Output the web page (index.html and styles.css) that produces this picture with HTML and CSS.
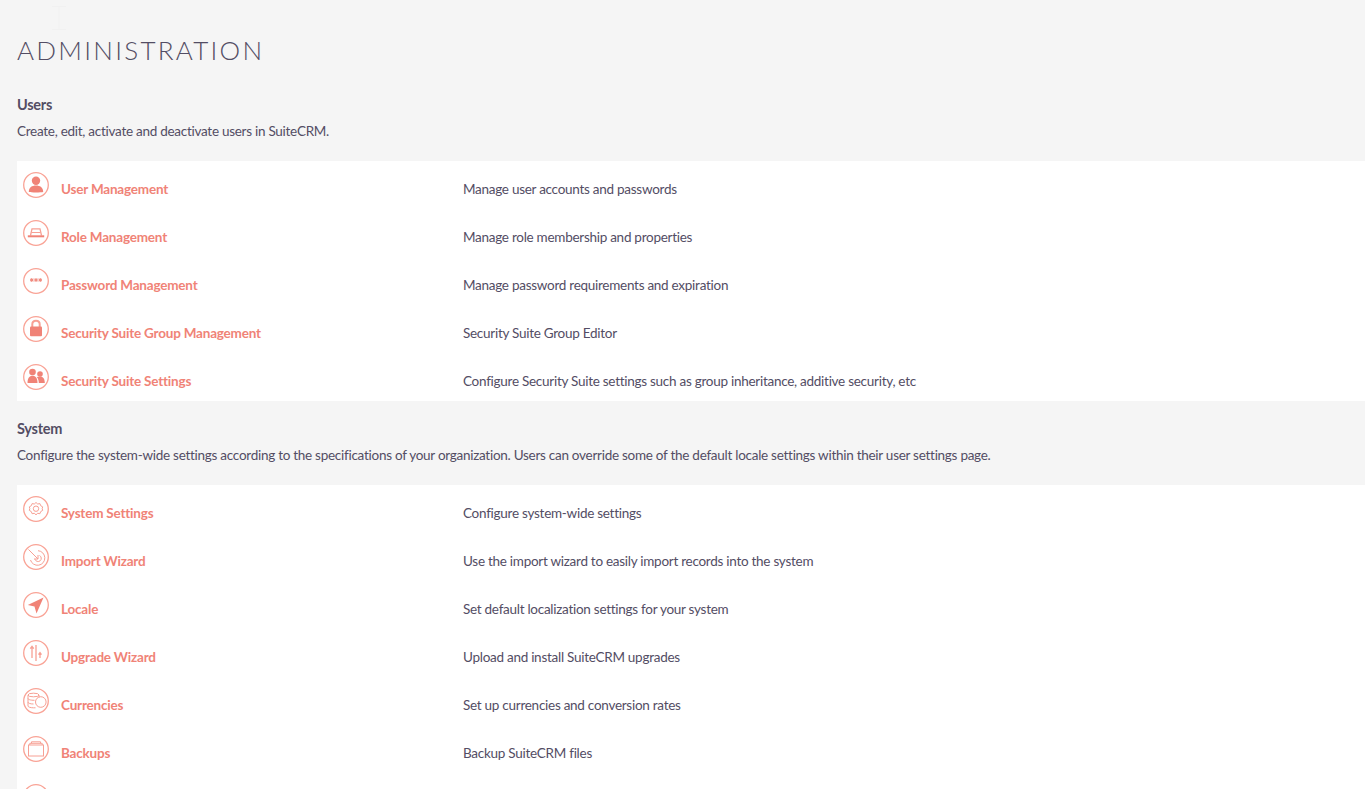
FILE: index.html
```html
<!DOCTYPE html>
<html lang="en">
<head>
<meta charset="utf-8">
<title>Administration</title>
<link rel="stylesheet" href="styles.css">
</head>
<body>
<svg class="ghost-cursor" viewBox="0 0 14 24" aria-hidden="true"><path d="M0 .5h14M0 23.500h14M7 .5v23"/></svg>
<main class="page">
  <h1 class="title">ADMINISTRATION</h1>

  <section class="first">
    <header class="sec-head">
      <h2>Users</h2>
      <p>Create, edit, activate and deactivate users in SuiteCRM.</p>
    </header>
    <div class="rows">
      <div class="row">
        <svg class="ico" viewBox="0 0 26 26"><circle class="ring" cx="13" cy="13" r="12.3"/><circle class="fill" cx="13" cy="8.800" r="4.200"/><path class="fill" d="M5.800 20c0-4.500 3.200-6.500 7.200-6.500s7.200 2 7.200 6.500c-2 .6-12.400.6-14.400 0z"/></svg>
        <a href="#">User Management</a><span>Manage user accounts and passwords</span>
      </div>
      <div class="row">
        <svg class="ico" viewBox="0 0 26 26"><circle class="ring" cx="13" cy="13" r="12.3"/><path class="line thick" d="M7.500 15.500 9 8.800h8l1.500 6.700"/><path class="fill" d="M4.800 15.300h16.400v2H4.800z"/><path class="line" d="M8.500 12.500h9"/></svg>
        <a href="#">Role Management</a><span>Manage role membership and properties</span>
      </div>
      <div class="row">
        <svg class="ico" viewBox="0 0 26 26"><circle class="ring" cx="13" cy="13" r="12.3"/><path class="star" d="M8.800 10v4M7 11l3.600 2M10.600 11 7 13M13 10v4M11.200 11l3.600 2M14.800 11l-3.600 2M17.200 10v4M15.400 11l3.600 2M19 11l-3.600 2"/></svg>
        <a href="#">Password Management</a><span>Manage password requirements and expiration</span>
      </div>
      <div class="row">
        <svg class="ico" viewBox="0 0 26 26"><circle class="ring" cx="13" cy="13" r="12.3"/><path class="line thicker" d="M9.300 11.500V8.300c0-2.200 1.500-3.500 3.700-3.500s3.700 1.300 3.700 3.500v3.200"/><rect class="fill" x="7" y="10.500" width="12" height="9.800" rx="1"/></svg>
        <a href="#">Security Suite Group Management</a><span>Security Suite Group Editor</span>
      </div>
      <div class="row">
        <svg class="ico" viewBox="0 0 26 26"><circle class="ring" cx="13" cy="13" r="12.3"/><circle class="fill" cx="9.500" cy="8" r="3.300"/><circle class="fill" cx="17" cy="10" r="2.800"/><path class="fill" d="M4.500 19c0-5 2-7.300 5-7.300s5 2.300 5 7.300z"/><path class="fill" d="M13.800 13c.8-.4 1.800-.6 3.200-.6 3.200 0 4.800 2.200 4.800 6.600h-6c0-2.500-.6-4.500-2-6z"/></svg>
        <a href="#">Security Suite Settings</a><span>Configure Security Suite settings such as group inheritance, additive security, etc</span>
      </div>
    </div>
  </section>

  <section>
    <header class="sec-head">
      <h2>System</h2>
      <p>Configure the system-wide settings according to the specifications of your organization. Users can override some of the default locale settings within their user settings page.</p>
    </header>
    <div class="rows">
      <div class="row">
        <svg class="ico" viewBox="0 0 26 26"><circle class="ring" cx="13" cy="13" r="12.3"/><path class="line" d="M13 6.500l1.700 1.500 2.200-.4.800 2.100 2 1.200-.5 1.600.5 1.900-2 1.200-.8 2.100-2.200-.4L13 18.800l-1.700-1.500-2.200.4-.8-2.100-2-1.200.5-1.900-.5-1.600 2-1.200.8-2.100 2.200.4z"/><circle class="line" cx="13" cy="12.700" r="2.700"/></svg>
        <a href="#">System Settings</a><span>Configure system-wide settings</span>
      </div>
      <div class="row">
        <svg class="ico" viewBox="0 0 26 26"><circle class="ring" cx="13" cy="13" r="12.3"/><path class="line" d="M15 6.700a7.300 7.300 0 1 1-7.500 9.300"/><path class="line" d="M16.500 11.500a3.200 3.200 0 1 1-4.500 3.800"/><path class="line" d="M5.500 5.500l9.500 9.500M15 11v4h-4"/></svg>
        <a href="#">Import Wizard</a><span>Use the import wizard to easily import records into the system</span>
      </div>
      <div class="row">
        <svg class="ico" viewBox="0 0 26 26"><circle class="ring" cx="13" cy="13" r="12.3"/><path class="fill" d="M20.500 5.500 4.800 13l6.700 1.600 2 6.900z"/></svg>
        <a href="#">Locale</a><span>Set default localization settings for your system</span>
      </div>
      <div class="row">
        <svg class="ico" viewBox="0 0 26 26"><circle class="ring" cx="13" cy="13" r="12.3"/><path class="line thick" d="M9 18V6.500M7.300 8.700 9 6.300l1.700 2.400M17 18v-5M15.500 14.700l1.500-2 1.500 2"/><path class="line thick" d="M13 21V5"/></svg>
        <a href="#">Upgrade Wizard</a><span>Upload and install SuiteCRM upgrades</span>
      </div>
      <div class="row">
        <svg class="ico" viewBox="0 0 26 26"><circle class="ring" cx="13" cy="13" r="12.3"/><ellipse class="line" cx="10.500" cy="7" rx="5.500" ry="1.800"/><path class="line" d="M5 7v11c0 1 2.400 1.800 5.500 1.800h2M5 10.500c0 1 2.400 1.800 6.500 1.800M5 14.200c0 1 2.400 1.800 5.500 1.800M16 7v2.500"/><circle class="line" cx="17.800" cy="14" r="5.300"/></svg>
        <a href="#">Currencies</a><span>Set up currencies and conversion rates</span>
      </div>
      <div class="row">
        <svg class="ico" viewBox="0 0 26 26"><circle class="ring" cx="13" cy="13" r="12.3"/><rect class="line" x="5.500" y="9" width="15" height="11"/><path class="line" d="M6.800 9V7.300h12.400V9M8.500 7.300V5.800h9v1.500"/></svg>
        <a href="#">Backups</a><span>Backup SuiteCRM files</span>
      </div>
      <div class="row">
        <svg class="ico" viewBox="0 0 26 26"><circle class="ring" cx="13" cy="13" r="12.3"/></svg>
      </div>
    </div>
  </section>
</main>
</body>
</html>
```

FILE: styles.css
```css
html, body {
  margin: 0;
  height: 100%;
  overflow: hidden;
}
body {
  background: #f5f5f5;
  color: #534d64;
  font-family: Lato, "Open Sans", sans-serif;
  font-size: 13.5px;
  letter-spacing: -0.27px;
}
.ghost-cursor {
  position: absolute;
  left: 52px;
  top: 6px;
  width: 14px;
  height: 24px;
  fill: none;
  stroke: #f1f1f1;
  stroke-width: 1;
}
.page {
  padding: 0 0 0 17px;
}
.title {
  margin: 0;
  padding-top: 35px;
  height: 31px;
  line-height: 31px;
  font-size: 26px;
  font-weight: 300;
  letter-spacing: 2.27px;
  color: #534d64;
}
.sec-head {
  height: 84px;
}
.first .sec-head {
  height: 95px;
}
.sec-head h2 {
  margin: 0;
  padding-top: 18px;
  font-size: 14.5px;
  line-height: 20px;
  font-weight: 700;
}
.first .sec-head h2 {
  padding-top: 29px;
}
.sec-head p {
  margin: 6px 0 0;
  line-height: 20px;
}
.rows {
  background: #fff;
}
.row {
  display: grid;
  grid-template-columns: 38px 402px 1fr;
  align-items: center;
  height: 48px;
  padding-left: 6px;
  box-sizing: border-box;
}
.row a {
  color: #f08377;
  font-weight: 700;
  text-decoration: none;
  line-height: 20px;
  letter-spacing: -0.2px;
  padding-top: 8px;
}
.row span {
  line-height: 20px;
  padding-top: 8px;
}
.ico {
  width: 26px;
  height: 26px;
}
.ring {
  fill: none;
  stroke: #f9a396;
  stroke-width: 1.3;
}
.fill {
  fill: #f08377;
}
.line {
  fill: none;
  stroke: #f7a094;
  stroke-width: 1;
}
.thick {
  stroke-width: 1.3;
}
.thicker {
  stroke-width: 2;
}
.star {
  fill: none;
  stroke: #f08377;
  stroke-width: 1;
}
```
